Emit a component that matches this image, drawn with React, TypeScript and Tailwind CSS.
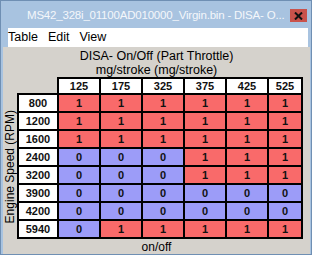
const COLS = ["125", "175", "325", "375", "425", "525"];

const ROWS: { rpm: string; vals: number[] }[] = [
  { rpm: "800", vals: [1, 1, 1, 1, 1, 1] },
  { rpm: "1200", vals: [1, 1, 1, 1, 1, 1] },
  { rpm: "1600", vals: [1, 1, 1, 1, 1, 1] },
  { rpm: "2400", vals: [0, 0, 0, 1, 1, 1] },
  { rpm: "3200", vals: [0, 0, 0, 1, 1, 1] },
  { rpm: "3900", vals: [0, 0, 0, 0, 0, 0] },
  { rpm: "4200", vals: [0, 0, 0, 0, 0, 0] },
  { rpm: "5940", vals: [0, 1, 1, 1, 1, 1] },
];

const ui = { fontFamily: '"Liberation Sans", Arial, sans-serif' };

export default function App() {
  return (
    <div
      className="w-[312px] h-[255px] bg-[#a8c3e0] border border-[#6f8fb3] flex flex-col overflow-hidden"
      style={ui}
    >
      {/* title bar */}
      <div className="h-[27px] flex items-center relative shrink-0">
        <div className="pl-[26px] pt-[2px] text-[11.5px] tracking-[-0.2px] text-[#f4f7fb] whitespace-nowrap">
          MS42_328i_01100AD010000_Virgin.bin - DISA- O...
        </div>
        <div className="absolute right-[4px] top-[8px] w-[17px] h-[13px] bg-[#c9524b] flex items-center justify-center">
          <svg width="9" height="8" viewBox="0 0 9 8">
            <path d="M1 0.5 L8 7.5 M8 0.5 L1 7.5" stroke="#111" strokeWidth="2" />
          </svg>
        </div>
      </div>

      {/* menu bar */}
      <div className="ml-[7px] mr-[3px] h-[19px] bg-white flex items-center gap-[10px] text-[12.5px] text-black shrink-0">
        <span>Table</span>
        <span>Edit</span>
        <span>View</span>
      </div>

      {/* client area */}
      <div className="ml-[2px] mr-[1px] mb-[3px] flex-1 bg-[#d5d2cc] flex flex-col">
        <div className="pt-[2px] text-center text-[12.5px] leading-[14px] text-black">
          <div>DISA- On/Off (Part Throttle)</div>
          <div>mg/stroke (mg/stroke)</div>
        </div>

        <div className="flex">
          <div className="w-[14px] pt-[18px]">
            <div className="h-[144px] flex items-center justify-center">
              <span className="[writing-mode:vertical-rl] rotate-180 text-[12px] leading-[13px] whitespace-nowrap">
                Engine Speed (RPM)
              </span>
            </div>
          </div>

          <div className="grid grid-cols-[42px_42px_42px_42px_42px_42px_34px] auto-rows-[18px] text-[11px] font-bold text-[#111]">
            <div className="border-r-2 border-b-2 border-black" />
            {COLS.map((c) => (
              <div
                key={c}
                className="bg-white border-t-2 border-r-2 border-b-2 border-black flex items-center justify-center"
              >
                {c}
              </div>
            ))}
            {ROWS.map((r) => (
              <div key={r.rpm} className="contents">
                <div className="bg-white border-l-2 border-r-2 border-b-2 border-black flex items-center justify-center">
                  {r.rpm}
                </div>
                {r.vals.map((v, i) => (
                  <div
                    key={i}
                    className={`border-r-2 border-b-2 border-black flex items-center justify-center ${
                      v ? "bg-[#f96a6a]" : "bg-[#9c9cf8]"
                    }`}
                  >
                    {v}
                  </div>
                ))}
              </div>
            ))}
          </div>
        </div>

        <div className="text-center text-[12px] leading-[13px] pt-[2px]">on/off</div>
      </div>
    </div>
  );
}
